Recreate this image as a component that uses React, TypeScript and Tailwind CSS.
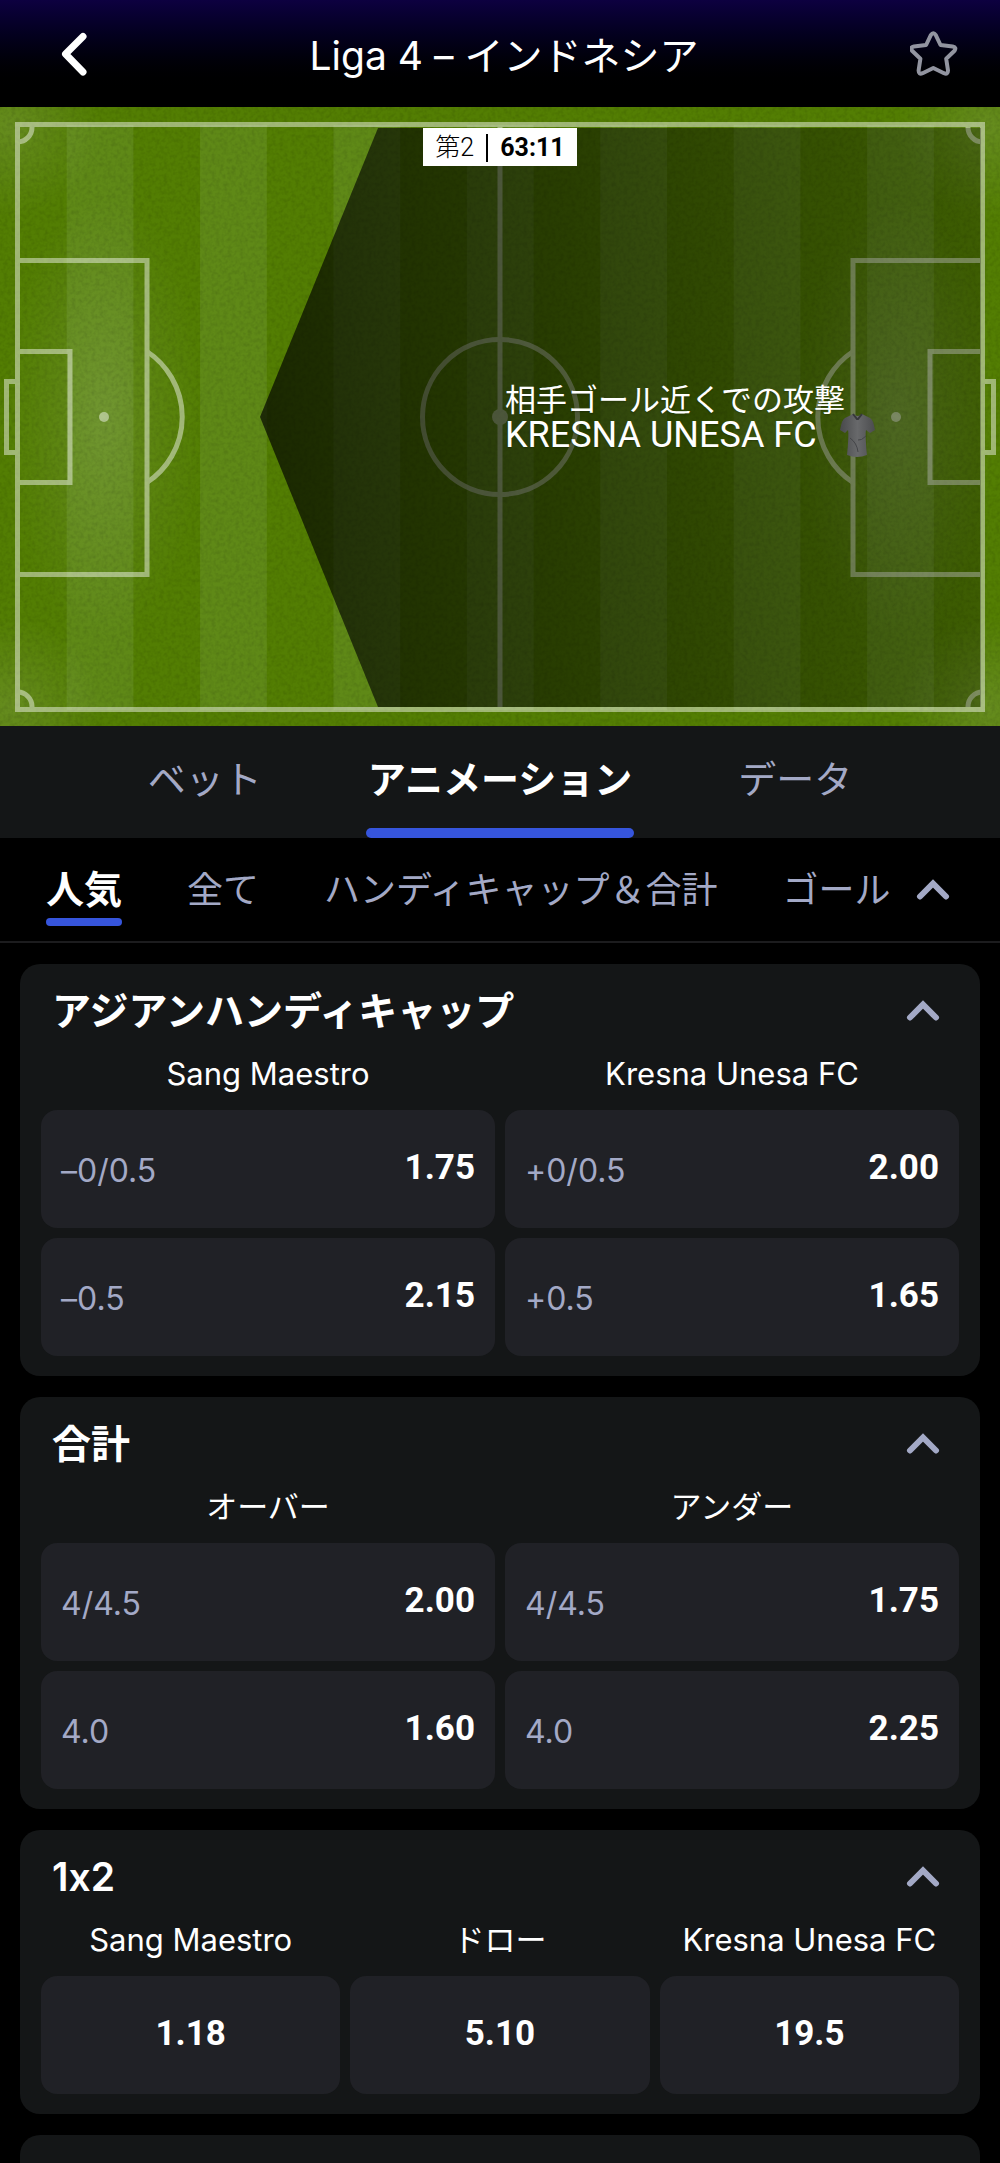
import React from 'react'
import clsx from 'clsx'

type Cell = { label?: string; odds: string }
type Market = { title: string; columns: string[]; rows: Cell[][] }

const tabs = ['ベット', 'アニメーション', 'データ']
const categories = ['人気', '全て', 'ハンディキャップ\uFF06合計', 'ゴール']

const markets: Market[] = [
  {
    title: 'アジアンハンディキャップ',
    columns: ['Sang Maestro', 'Kresna Unesa FC'],
    rows: [
      [{ label: '–0/0.5', odds: '1.75' }, { label: '+0/0.5', odds: '2.00' }],
      [{ label: '–0.5', odds: '2.15' }, { label: '+0.5', odds: '1.65' }],
    ],
  },
  {
    title: '合計',
    columns: ['オーバー', 'アンダー'],
    rows: [
      [{ label: '4/4.5', odds: '2.00' }, { label: '4/4.5', odds: '1.75' }],
      [{ label: '4.0', odds: '1.60' }, { label: '4.0', odds: '2.25' }],
    ],
  },
  {
    title: '1x2',
    columns: ['Sang Maestro', 'ドロー', 'Kresna Unesa FC'],
    rows: [[{ odds: '1.18' }, { odds: '5.10' }, { odds: '19.5' }]],
  },
]

const ChevronUp = () => (
  <svg viewBox="0 0 34 22" className="h-[22px] w-[34px]" fill="none" stroke="#a3a9c6" strokeWidth="6" strokeLinecap="round" strokeLinejoin="miter">
    <path d="M4 17.500 17 4.500l13 13" />
  </svg>
)

// One half of the markings, mirrored for the other side
const HalfMarkings = () => (
  <g>
    <path d="M17.5 153.500H147v314H17.500" />
    <path d="M17.5 244.500H70v131H17.500" />
    <path d="M15 274.500H6.500v71H15" />
    <path d="M147 244.500a78.500 78.500 0 0 1 0 131" />
    <path d="M32 20a14.500 14.500 0 0 1-14.500 15M32 600a14.500 14.500 0 0 0-14.500-15" />
    <circle cx="104" cy="310" r="5" fill="#fff" stroke="none" />
  </g>
)

const Pitch = () => (
  <svg viewBox="0 0 1000 619" className="block w-full" aria-hidden="true">
    <defs>
      <pattern id="stripes" width="133.400" height="619" patternUnits="userSpaceOnUse">
        <rect width="133.400" height="619" fill="#537e03" />
        <rect x="66.700" width="66.700" height="619" fill="#5f8917" />
      </pattern>
      <linearGradient id="zone" x1="0" x2="1" y1="0" y2="0">
        <stop offset="0" stopColor="#000" stopOpacity="0.68" />
        <stop offset="0.4" stopColor="#000" stopOpacity="0.52" />
        <stop offset="1" stopColor="#000" stopOpacity="0.26" />
      </linearGradient>
      <radialGradient id="shine">
        <stop offset="0" stopColor="#fff" stopOpacity="0.11" />
        <stop offset="1" stopColor="#fff" stopOpacity="0" />
      </radialGradient>
      <linearGradient id="shirt" x1="0" x2="1" y1="0" y2="0">
        <stop offset="0" stopColor="#48494b" />
        <stop offset="0.5" stopColor="#68696b" />
        <stop offset="1" stopColor="#4b4c4e" />
      </linearGradient>
      <filter id="grain" x="0" y="0" width="100%" height="100%">
        <feTurbulence type="fractalNoise" baseFrequency="0.25" numOctaves="2" seed="4" />
        <feColorMatrix values="0 0 0 0 0  0 0 0 0 0  0 0 0 0 0  0.7 0 0 0 -0.27" />
      </filter>
    </defs>
    <rect width="1000" height="619" fill="#537e03" />
    <rect y="18" width="1000" height="585" fill="url(#stripes)" />
    <ellipse cx="104" cy="310" rx="100" ry="220" fill="url(#shine)" />
    <ellipse cx="896" cy="310" rx="100" ry="220" fill="url(#shine)" />
    <circle cx="10" cy="20" r="90" fill="url(#shine)" />
    <circle cx="990" cy="20" r="90" fill="url(#shine)" />
    <circle cx="10" cy="600" r="90" fill="url(#shine)" />
    <circle cx="990" cy="600" r="90" fill="url(#shine)" />
    <rect width="1000" height="619" filter="url(#grain)" opacity="0.3" />
    <g fill="none" stroke="#fff" strokeWidth="5" opacity="0.45">
      <rect x="17.500" y="17.500" width="965" height="585" />
      <path d="M500 20v580" />
      <circle cx="500" cy="310" r="77.500" />
      <circle cx="500" cy="310" r="8" fill="#fff" stroke="none" />
      <HalfMarkings />
      <g transform="matrix(-1 0 0 1 1000 0)">
        <HalfMarkings />
      </g>
    </g>
    <path d="M378 21 260 310l118 290h603V21Z" fill="url(#zone)" />
    <g transform="translate(840 307)">
      <path d="M13 0 5 4Q2 5 0 16l5 3 3-3q1 5-1 25 10 4 20 0-2-20-1-25l4 3 5-3Q33 5 30 4l-8-4q-4 4-9 0Z" fill="url(#shirt)" />
      <path d="m13 0 4 5h1l4-5" fill="none" stroke="#37383c" strokeWidth="2" />
      <path d="M10 24q7 5 8 14M26 22q-5 5-8 4" fill="none" stroke="#444548" />
    </g>
  </svg>
)

const MarketCard = ({ market }: { market: Market }) => {
  const cols = market.columns.length === 3 ? 'grid-cols-3' : 'grid-cols-2'
  return (
    <section className="rounded-[20px] bg-[#141617] px-[21px] pb-5">
      <button type="button" className="flex h-[74px] w-full items-center justify-between pt-5 pr-[19px] pl-[11px] text-[39px] leading-[54px] font-semibold">
        {market.title}
        <ChevronUp />
      </button>
      <div className={clsx('grid h-[72px] items-center gap-[10px] text-center text-[31px]', cols)}>
        {market.columns.map((name) => (
          <span key={name}>{name}</span>
        ))}
      </div>
      <div className={clsx('grid gap-[10px]', cols)}>
        {market.rows.flat().map((cell, i) => (
          <button
            key={i}
            type="button"
            className={clsx('flex h-[118px] items-center rounded-2xl bg-[#202126] px-5', cell.label ? 'justify-between' : 'justify-center')}
          >
            {cell.label && <span className="pt-1 text-[32px] text-[#a3a9c6]">{cell.label}</span>}
            <span className="pb-[2px] font-['Roboto'] text-[35px] font-bold">{cell.odds}</span>
          </button>
        ))}
      </div>
    </section>
  )
}

const App = () => {
  return (
    <div className="flex min-h-screen flex-col bg-black font-['Inter','Noto_Sans_CJK_JP',sans-serif] text-white [font-variant-ligatures:none]">
      <header className="flex h-[107px] items-center justify-between bg-linear-to-b from-[#0d0040] to-black to-90% pr-[42px] pl-[50px]">
        <button type="button" aria-label="戻る" className="flex h-12 w-12 items-center justify-center">
          <svg viewBox="0 0 28 44" className="h-11 w-7" fill="none" stroke="#fff" strokeWidth="7" strokeLinecap="round" strokeLinejoin="round">
            <path d="M23 4.500 5.500 22 23 40" />
          </svg>
        </button>
        <h1 className="pt-1 text-[39px] leading-[54px]">Liga 4 – インドネシア</h1>
        <button type="button" aria-label="お気に入り" className="flex h-12 w-12 items-center justify-center">
          <svg viewBox="0 0 48 48" className="h-12 w-12" fill="none" stroke="#9294a0" strokeWidth="4" strokeLinejoin="round">
            <path d="M20.800 5.200q2.500-3.800 5 0l4.700 9.800 12.200 1.500q4.200.8 1.800 4.300l-8.300 8 1.800 11.700q0 4.300-4 2.700L23.300 38l-10.700 5.200q-4 1.600-4-2.700l1.800-11.700-8.300-8q-2.400-3.500 1.800-4.300L16.100 15Z" />
          </svg>
        </button>
      </header>

      <div className="relative">
        <Pitch />
        <div className="absolute inset-x-0 top-[21px] flex justify-center">
          <div className="flex h-[38px] items-center gap-3 bg-white px-3 pt-[2px] font-['Roboto','Noto_Sans_CJK_JP',sans-serif] text-[25px] leading-7 text-black">
            <span className="font-light">第2</span>
            <span className="h-7 w-[2px] bg-black" />
            <span className="font-bold">63:11</span>
          </div>
        </div>
        <div className="absolute top-[276px] left-[505px] font-['Roboto','Noto_Sans_CJK_JP',sans-serif] leading-[35px] text-shadow-sm">
          <p className="text-[31px]">相手ゴール近くでの攻撃</p>
          <p className="text-[36px]">KRESNA UNESA FC</p>
        </div>
      </div>

      <nav className="flex h-[112px] justify-center gap-[104px] bg-[#141617] text-[38px]">
        {tabs.map((tab, i) => (
          <button
            key={tab}
            type="button"
            className={clsx('relative pb-[6px]', i === 1 ? 'px-[2px] font-bold' : 'text-[#a3a9c6]')}
          >
            {tab}
            {i === 1 && <span className="absolute inset-x-0 bottom-0 h-[10px] rounded-full bg-[#3655dc]" />}
          </button>
        ))}
      </nav>

      <nav className="flex h-[105px] items-center border-b-2 border-[#1c1c1e] pr-[50px] pl-[46px]">
        <div className="flex flex-1 gap-[65px] whitespace-nowrap">
          {categories.map((name, i) => (
            <button
              key={name}
              type="button"
              className={clsx('relative h-[72px]', i === 0 ? 'text-[38px] font-bold' : 'text-[36px] text-[#a3a9c6]')}
            >
              {name}
              {i === 0 && <span className="absolute inset-x-0 bottom-0 h-2 rounded-full bg-[#3655dc]" />}
            </button>
          ))}
        </div>
        <button type="button" aria-label="閉じる">
          <ChevronUp />
        </button>
      </nav>

      <main className="flex flex-1 flex-col gap-[21px] px-5 pt-[21px]">
        {markets.map((market) => (
          <MarketCard key={market.title} market={market} />
        ))}
        <section className="min-h-7 flex-1 rounded-t-[20px] bg-[#141617]" />
      </main>
    </div>
  )
}

export default App
